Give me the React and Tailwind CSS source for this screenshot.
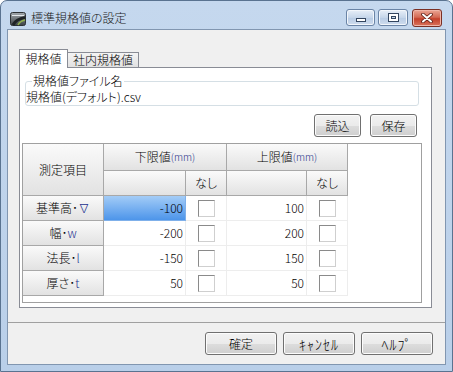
import React from "react"

const rows = [
  { label: "基準高･", mark: "∇", lo: "-100", hi: "100", selected: true },
  { label: "幅･", mark: "w", lo: "-200", hi: "200" },
  { label: "法長･", mark: "l", lo: "-150", hi: "150" },
  { label: "厚さ･", mark: "t", lo: "50", hi: "50" },
]

function WinButton({ children, className = "text-[12px]" }) {
  return (
    <div
      className={`flex h-[23px] items-center justify-center rounded-[3px] border border-[#707070] bg-[linear-gradient(to_bottom,#f2f2f2_0%,#ebebeb_50%,#dddddd_51%,#cfcfcf_100%)] leading-none text-black shadow-[inset_0_0_0_1px_#fcfcfc] ${className}`}
    >
      {children}
    </div>
  )
}

function HeadCell({ children, className = "" }) {
  return (
    <div
      className={`flex items-center justify-center border-r border-b border-[#a8a8a8] bg-[linear-gradient(to_bottom,#fafafa,#e2e2e2)] text-[12px] leading-none text-black ${className}`}
    >
      {children}
    </div>
  )
}

function Mm() {
  return <span className="text-[10px] text-[#27328a]">(mm)</span>
}

function CheckCell() {
  return (
    <div className="flex items-center justify-center border-r border-b border-[#ededed] bg-white">
      <div className="h-[17px] w-[17px] border border-t-[#8a8a8a] border-l-[#8a8a8a] border-r-[#cfcfcf] border-b-[#cfcfcf] bg-white" />
    </div>
  )
}

function AppIcon() {
  return (
    <svg width="16" height="16" viewBox="0 0 16 16">
      <defs>
        <linearGradient id="ic" x1="0" y1="0" x2="0" y2="1">
          <stop offset="0" stopColor="#a3a9ae" />
          <stop offset="1" stopColor="#3b4043" />
        </linearGradient>
      </defs>
      <rect x="0.5" y="1.5" width="15" height="13" rx="2" fill="url(#ic)" stroke="#2d3134" />
      <path d="M2 4.5 H14" stroke="#e4e8ea" strokeWidth="1.2" />
      <path d="M3 14 Q6 8 15 6.5" stroke="#1f2326" strokeWidth="3" fill="none" />
      <path d="M8 14 Q10 10 15 9" stroke="#8fb04a" strokeWidth="1.6" fill="none" />
    </svg>
  )
}

function CaptionButtons() {
  return (
    <div className="ml-auto flex items-start gap-[3px]">
      <div className="flex h-[17px] w-[29px] items-end justify-center rounded-[3px] border border-[#6a84a6] bg-[linear-gradient(to_bottom,#e8eff8,#c6d6ea_50%,#b7cbe4_51%,#cfdcee)] pb-[3px] shadow-[inset_0_0_0_1px_#f2f6fb]">
        <div className="h-[4px] w-[10px] border border-[#33455f] bg-white" />
      </div>
      <div className="flex h-[17px] w-[30px] items-center justify-center rounded-[3px] border border-[#6a84a6] bg-[linear-gradient(to_bottom,#e8eff8,#c6d6ea_50%,#b7cbe4_51%,#cfdcee)] shadow-[inset_0_0_0_1px_#f2f6fb]">
        <div className="h-[9px] w-[11px] border border-[#33455f] bg-white p-[2px]">
          <div className="h-full w-full border border-[#33455f] bg-[#c6d6ea]" />
        </div>
      </div>
      <div className="ml-px flex h-[18px] w-[30px] items-center justify-center rounded-[3px] border border-[#7a2f24] bg-[linear-gradient(to_bottom,#eba594,#d46a55_45%,#c4402b_55%,#d9735c)] shadow-[inset_0_0_0_1px_#f0b5a8]">
        <svg width="12" height="10" viewBox="0 0 12 10">
          <path d="M2 1.5 L10 8.5 M10 1.5 L2 8.5" stroke="#5a1c14" strokeWidth="3.6" strokeLinecap="round" />
          <path d="M2 1.5 L10 8.5 M10 1.5 L2 8.5" stroke="#ffffff" strokeWidth="2" strokeLinecap="round" />
        </svg>
      </div>
    </div>
  )
}

export default function App() {
  return (
    <div className="flex h-[372px] w-[453px] flex-col overflow-hidden rounded-t-[7px] border border-[#5a7390] bg-[linear-gradient(to_bottom,#c5d8ee,#b9cfe9)] font-['Noto_Sans_CJK_JP',sans-serif] font-light text-black [font-feature-settings:'palt']">
      {/* タイトルバー */}
      <div className="flex h-[28px] shrink-0 items-start pl-[9px] pr-[10px] pt-[8px]">
        <div className="mt-[2px]">
          <AppIcon />
        </div>
        <span className="ml-[5px] text-[12px] leading-[18px] text-[#1a1a1a]">標準規格値の設定</span>
        <CaptionButtons />
      </div>

      {/* クライアント領域 */}
      <div className="ml-[6px] flex h-[336px] w-[439px] flex-col border border-[#8196b0] bg-[#f0f0f0]">
        <div className="pl-[11px] pt-[19px]">
          {/* タブ */}
          <div className="flex h-[18px] items-end">
            <div className="relative z-10 -mb-px flex h-[19px] w-[49px] items-center justify-center border border-b-0 border-[#898c95] bg-white text-[12px] leading-none">
              規格値
            </div>
            <div className="-ml-px flex h-[15px] w-[72px] items-center justify-center border border-b-0 border-[#898c95] bg-[linear-gradient(to_bottom,#f4f4f4,#e1e1e1)] text-[12px] leading-none">
              社内規格値
            </div>
          </div>

          {/* タブページ */}
          <div className="flex h-[241px] w-[413px] flex-col border border-[#898c95] bg-white">
            <div className="relative ml-[5px] mt-[13px] h-[25px] w-[394px] rounded-[3px] border border-[#d5dfe5]">
              <span className="absolute -top-[7px] left-[6px] bg-white px-px text-[12px] leading-[12px]">規格値ファイル名</span>
              <div className="pt-[8px] text-[12px] leading-[13px]">規格値(デフォルト).csv</div>
            </div>

            <div className="mt-[8px] flex justify-end gap-[9px] pr-[14px]">
              <WinButton className="w-[47px] text-[12px]">読込</WinButton>
              <WinButton className="w-[47px] text-[12px]">保存</WinButton>
            </div>

            {/* 一覧 */}
            <div className="ml-[2px] mt-[6px] h-[160px] w-[400px] border border-[#a0a0a0] bg-white">
              <div className="grid w-[325px] grid-cols-[81px_82px_41px_80px_41px] grid-rows-[27px_25px_25px_25px_25px_25px]">
                <HeadCell className="row-span-2">測定項目</HeadCell>
                <HeadCell className="col-span-2">
                  下限値<Mm />
                </HeadCell>
                <HeadCell className="col-span-2">
                  上限値<Mm />
                </HeadCell>
                <HeadCell />
                <HeadCell>なし</HeadCell>
                <HeadCell />
                <HeadCell>なし</HeadCell>

                {rows.map((r) => (
                  <React.Fragment key={r.label}>
                    <HeadCell>
                      {r.label}
                      <span className="text-[#22318f]">{r.mark}</span>
                    </HeadCell>
                    <div
                      className={
                        r.selected
                          ? "flex items-center justify-end border-r border-b border-[#7fb0ea] bg-[linear-gradient(to_bottom,#a3ccf7,#4d95ea)] pr-[2px] text-[12px] leading-none"
                          : "flex items-center justify-end border-r border-b border-[#ededed] pr-[2px] text-[12px] leading-none"
                      }
                    >
                      {r.lo}
                    </div>
                    <CheckCell />
                    <div className="flex items-center justify-end border-r border-b border-[#ededed] pr-[2px] text-[12px] leading-none">
                      {r.hi}
                    </div>
                    <CheckCell />
                  </React.Fragment>
                ))}
              </div>
            </div>
          </div>
        </div>

        <div className="mt-[14px] border-t border-[#a0a0a0]" />

        <div className="mt-[9px] flex justify-end gap-[6px] pr-[12px] [font-feature-settings:normal]">
          <WinButton className="w-[72px] text-[12px]">確定</WinButton>
          <WinButton className="w-[72px] text-[14px] tracking-[1px]">ｷｬﾝｾﾙ</WinButton>
          <WinButton className="w-[72px] text-[14px] tracking-[1px]">ﾍﾙﾌﾟ</WinButton>
        </div>
      </div>
    </div>
  )
}
